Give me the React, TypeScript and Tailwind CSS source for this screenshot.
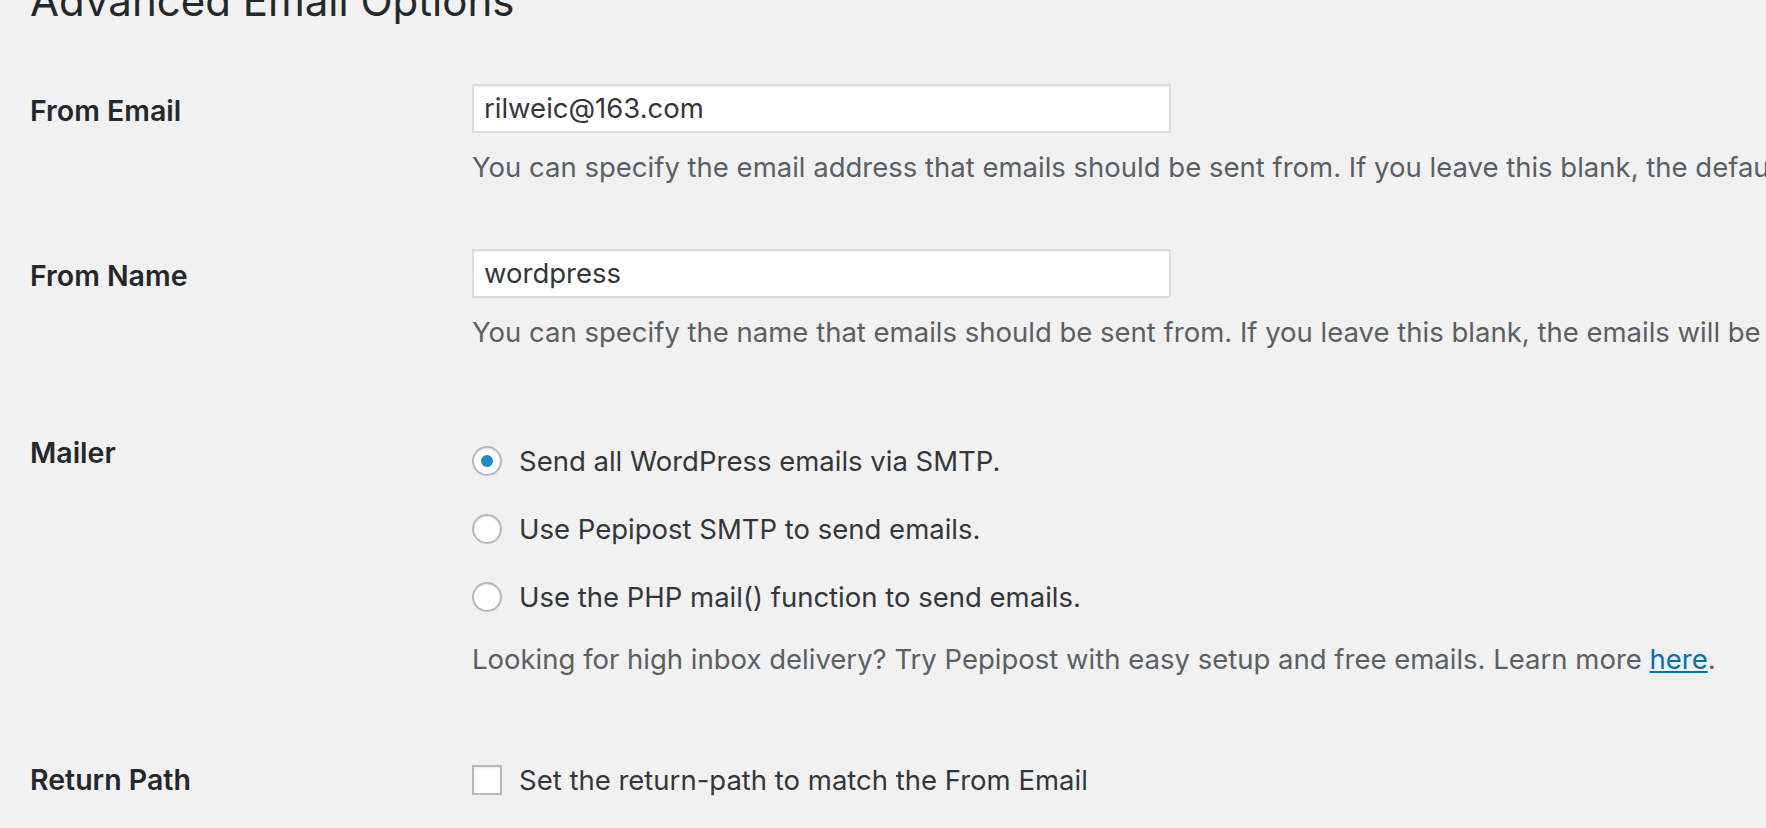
import React from 'react';

const font = { fontFamily: 'Inter, "Noto Sans", sans-serif' };

const Radio = ({ checked, label }: { checked?: boolean; label: string }) => (
  <label className="flex h-[68px] items-center">
    <span className="flex h-[30px] w-[30px] shrink-0 items-center justify-center rounded-full border-2 border-[#b4b9be] bg-white shadow-[inset_0_1px_2px_rgba(0,0,0,0.1)]">
      {checked && <span className="h-[12px] w-[12px] rounded-full bg-[#1e8cbe]" />}
    </span>
    <span className="ml-[17px] text-[27.5px] leading-[32px] text-[#32373c]">{label}</span>
  </label>
);

export default function App() {
  return (
    <div className="h-[828px] w-full overflow-hidden bg-[#f1f1f1] pl-[30px] antialiased" style={font}>
      <h1 className="mt-[-25px] text-[42px] leading-[52px] font-normal text-[#23282d]">Advanced Email Options</h1>

      {/* From Email */}
      <div className="mt-[57px] flex">
        <div className="w-[442px] shrink-0 pt-[11px] text-[28.5px] leading-[32px] font-semibold text-[#23282d]">From Email</div>
        <div className="flex-1 whitespace-nowrap">
          <div className="flex h-[49px] w-[699px] items-center border-2 border-[#dddddd] bg-white pl-[10px] text-[27.5px] text-[#32373c] shadow-[inset_0_1px_2px_rgba(0,0,0,0.07)]">
            rilweic@163.com
          </div>
          <p className="mt-[18px] text-[27.5px] leading-[32px] text-[#5a5f64]">
            You can specify the email address that emails should be sent from. If you leave this blank, the default email will be used.
          </p>
        </div>
      </div>

      {/* From Name */}
      <div className="mt-[66px] flex">
        <div className="w-[442px] shrink-0 pt-[11px] text-[28.5px] leading-[32px] font-semibold text-[#23282d]">From Name</div>
        <div className="flex-1 whitespace-nowrap">
          <div className="flex h-[49px] w-[699px] items-center border-2 border-[#dddddd] bg-white pl-[10px] text-[27.5px] text-[#32373c] shadow-[inset_0_1px_2px_rgba(0,0,0,0.07)]">
            wordpress
          </div>
          <p className="mt-[18px] text-[27.5px] leading-[32px] text-[#5a5f64]">
            You can specify the name that emails should be sent from. If you leave this blank, the emails will be sent from WordPress.
          </p>
        </div>
      </div>

      {/* Mailer */}
      <div className="mt-[79px] flex">
        <div className="w-[442px] shrink-0 pt-[10px] text-[28.5px] leading-[32px] font-semibold text-[#23282d]">Mailer</div>
        <div className="flex-1 whitespace-nowrap">
          <Radio checked label="Send all WordPress emails via SMTP." />
          <Radio label="Use Pepipost SMTP to send emails." />
          <Radio label="Use the PHP mail() function to send emails." />
          <p className="mt-[12px] text-[27.5px] leading-[32px] text-[#5a5f64]">
            Looking for high inbox delivery? Try Pepipost with easy setup and free emails. Learn more{' '}
            <a href="#" className="text-[#0073aa] underline">here</a>.
          </p>
        </div>
      </div>

      {/* Return Path */}
      <div className="mt-[85px] flex h-[40px] items-center">
        <div className="w-[442px] shrink-0 text-[28.5px] leading-[32px] font-semibold text-[#23282d]">Return Path</div>
        <label className="flex items-center whitespace-nowrap">
          <span className="h-[30px] w-[30px] shrink-0 border-2 border-[#b4b9be] bg-white shadow-[inset_0_1px_2px_rgba(0,0,0,0.1)]" />
          <span className="ml-[17px] text-[27.5px] leading-[32px] text-[#32373c]">Set the return-path to match the From Email</span>
        </label>
      </div>
    </div>
  );
}
